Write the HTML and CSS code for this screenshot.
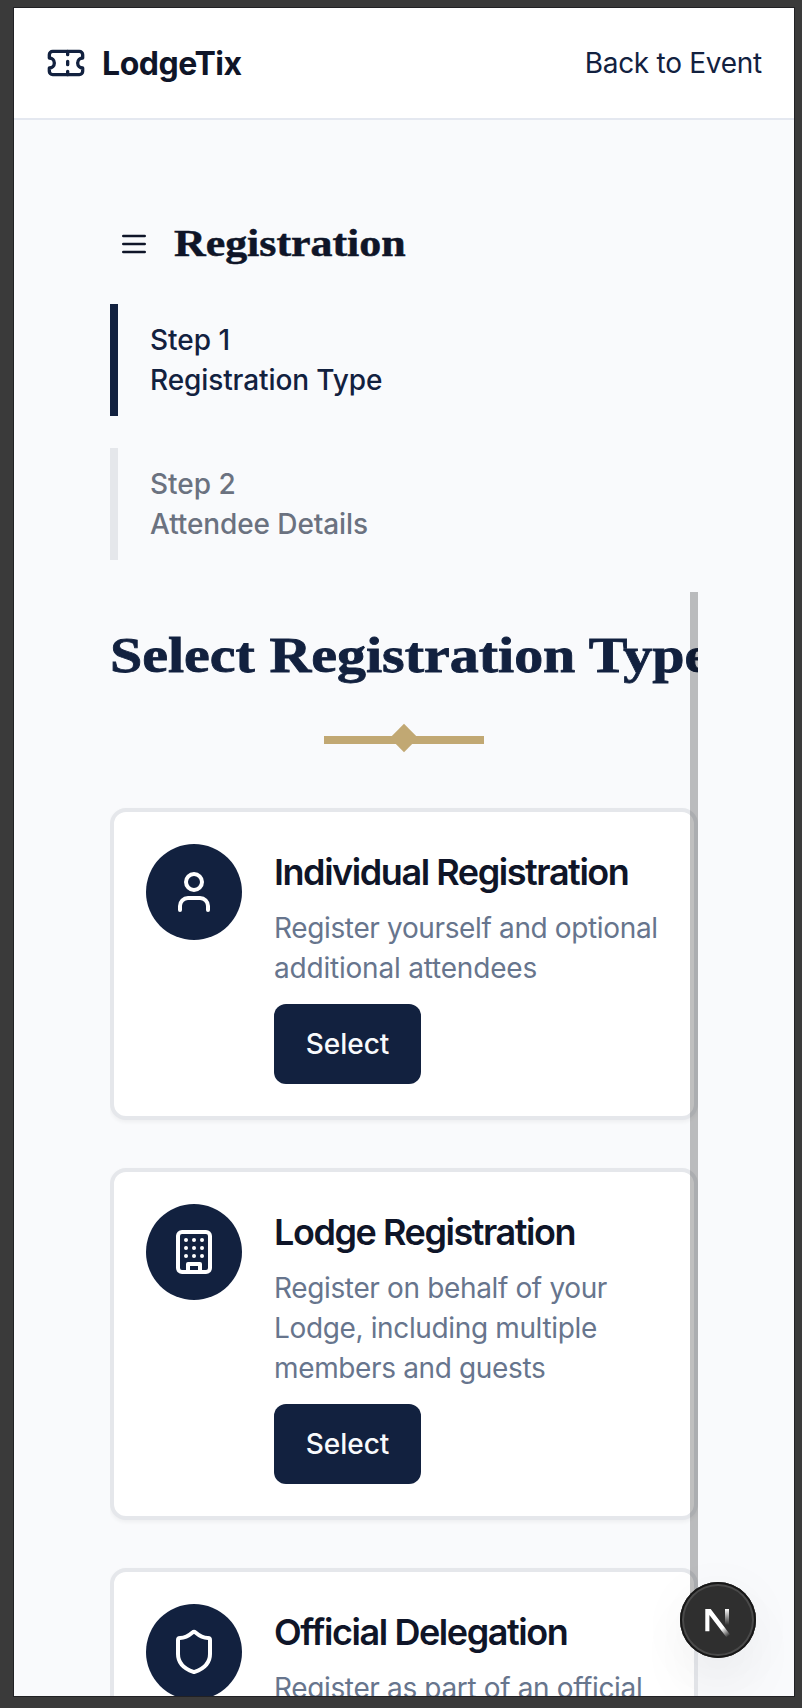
FILE: index.html
```html
<!DOCTYPE html>
<html lang="en">
<head>
<meta charset="utf-8">
<title>LodgeTix</title>
<link rel="stylesheet" href="styles.css">
</head>
<body>
<div class="app">
  <header class="header">
    <div class="brand">
      <svg class="icon brand-icon" viewBox="0 0 24 24"><path d="M2 9a3 3 0 0 1 0 6v2a2 2 0 0 0 2 2h16a2 2 0 0 0 2-2v-2a3 3 0 0 1 0-6V7a2 2 0 0 0-2-2H4a2 2 0 0 0-2 2Z"/><path d="M13 5v2M13 17v2M13 11v2"/></svg>
      <span class="brand-name">LodgeTix</span>
    </div>
    <a class="back">Back to Event</a>
  </header>
  <main class="main">
    <div class="page-head">
      <svg class="icon menu-icon" viewBox="0 0 24 24"><path d="M4 6h16M4 12h16M4 18h16"/></svg>
      <h2 class="page-title">Registration</h2>
    </div>
    <nav class="steps">
      <div class="step step-active"><span>Step 1</span><span class="step-name">Registration Type</span></div>
      <div class="step"><span>Step 2</span><span class="step-name">Attendee Details</span></div>
    </nav>
    <section class="scroller">
      <h1 class="title">Select Registration Type</h1>
      <div class="divider"><i class="diamond"></i></div>
      <div class="cards">
        <article class="card">
          <div class="avatar"><svg class="icon" viewBox="0 0 24 24"><path d="M19 21v-2a4 4 0 0 0-4-4H9a4 4 0 0 0-4 4v2"/><circle cx="12" cy="7" r="4"/></svg></div>
          <div class="card-body">
            <h3 class="card-title">Individual Registration</h3>
            <p class="desc">Register yourself and optional<br><span class="loose">additional attendees</span></p>
            <button class="select">Select</button>
          </div>
        </article>
        <article class="card">
          <div class="avatar"><svg class="icon" viewBox="0 0 24 24"><rect width="16" height="20" x="4" y="2" rx="2"/><path d="M9 22v-4h6v4M8 6h.01M16 6h.01M12 6h.01M12 10h.01M12 14h.01M16 10h.01M16 14h.01M8 10h.01M8 14h.01"/></svg></div>
          <div class="card-body">
            <h3 class="card-title">Lodge Registration</h3>
            <p class="desc">Register on behalf of your<br>Lodge, including multiple<br>members and guests</p>
            <button class="select">Select</button>
          </div>
        </article>
        <article class="card">
          <div class="avatar"><svg class="icon" viewBox="0 0 24 24"><path d="M20 13c0 5-3.5 7.5-7.66 8.95a1 1 0 0 1-.67-.01C7.5 20.5 4 18 4 13V6a1 1 0 0 1 1-1c2 0 4.5-1.2 6.24-2.72a1.17 1.17 0 0 1 1.52 0C14.51 3.81 17 5 19 5a1 1 0 0 1 1 1z"/></svg></div>
          <div class="card-body">
            <h3 class="card-title">Official Delegation</h3>
            <p class="desc">Register as part of an official</p>
          </div>
        </article>
      </div>
      <div class="thumb"></div>
    </section>
  </main>
  <div class="dev-badge">
    <svg viewBox="0 0 76 76" width="76" height="76">
      <defs>
        <linearGradient id="diag" gradientUnits="userSpaceOnUse" x1="39" y1="42" x2="49" y2="54"><stop offset="0" stop-color="#fff"/><stop offset=".35" stop-color="#fff"/><stop offset="1" stop-color="#fff" stop-opacity="0"/></linearGradient>
        <linearGradient id="stem" gradientUnits="userSpaceOnUse" x1="0" y1="27" x2="0" y2="43"><stop offset="0" stop-color="#fff"/><stop offset="1" stop-color="#fff" stop-opacity="0"/></linearGradient>
      </defs>
      <path d="M25.3 27h5.4L50 52.6l-3.6 2.6L29.4 33v16.3h-4.1z" fill="url(#diag)"/>
      <path d="M45 27h4v17h-4z" fill="url(#stem)"/>
    </svg>
  </div>
</div>
</body>
</html>
```
FILE: styles.css
```css
* { box-sizing: border-box; margin: 0; padding: 0; }
body {
  width: 802px; height: 1708px; overflow: hidden;
  padding: 7px 7px 11px 13px;
  background: #3a3a3a;
  font-family: Inter, "Liberation Sans", sans-serif;
  color: #0f1528;
}
.app {
  position: relative;
  width: 782px; height: 1690px; overflow: hidden;
  border: 1px solid #212124;
  background: #f9fafc;
}
.icon { display: block; fill: none; stroke: currentColor; stroke-width: 2; stroke-linecap: round; stroke-linejoin: round; }
.header {
  display: flex; align-items: center; justify-content: space-between;
  height: 112px; padding: 0 32px;
  background: #fff; border-bottom: 2px solid #e4e8f0;
}
.brand { display: flex; align-items: center; gap: 16px; }
.brand-icon { width: 40px; height: 40px; color: #12213f; }
.brand-name { padding-top: 2px; font-size: 32px; font-weight: 700; line-height: 40px; letter-spacing: -.45px; }
.back { font-size: 28px; line-height: 40px; color: #12213f; letter-spacing: -.27px; }
.main { padding: 92px 96px 0; }
.page-head { display: flex; align-items: center; gap: 24px; height: 64px; padding-left: 8px; }
.menu-icon { width: 32px; height: 32px; }
.page-title {
  font: 700 38px/56px "Liberation Serif", serif;
  -webkit-text-stroke: .5px currentColor;
  transform: translateY(-1px) scaleX(1.155); transform-origin: left;
}
.steps { display: flex; flex-direction: column; gap: 32px; margin-top: 28px; }
.step {
  display: flex; flex-direction: column;
  height: 112px; padding: 16px 0 16px 32px;
  border-left: 8px solid #e5e7eb;
  font-size: 28px; font-weight: 500; line-height: 40px; color: #6b7280;
}
.step-name { letter-spacing: -.1px; }
.step-active { border-color: #12213f; color: #12213f; }
.scroller { position: relative; width: 588px; height: 1104px; margin-top: 32px; overflow: hidden; }
.title {
  padding-top: 32px;
  font: 700 51px/64px "Liberation Serif", serif; color: #12213f; white-space: nowrap;
  -webkit-text-stroke: .8px currentColor;
  transform: translateY(-1px) scaleX(1.137); transform-origin: left;
}
.divider { position: relative; width: 160px; height: 8px; margin: 48px auto 64px 214px; background: #c1a873; }
.diamond { position: absolute; left: 70px; top: -8px; width: 20px; height: 20px; background: #c1a873; transform: rotate(45deg); }
.cards { display: flex; flex-direction: column; gap: 48px; }
.card {
  display: flex; gap: 32px; padding: 32px;
  background: #fff; border: 4px solid #e5e7eb; border-radius: 16px;
  box-shadow: 0 2px 4px rgba(0, 0, 0, .05);
}
.avatar { display: flex; flex: none; align-items: center; justify-content: center; width: 96px; height: 96px; border-radius: 50%; background: #12213f; color: #fff; }
.avatar .icon { width: 48px; height: 48px; }
.card-title { font-size: 36px; font-weight: 600; line-height: 56px; letter-spacing: -1.44px; white-space: nowrap; }
.desc { margin-top: 8px; font-size: 28px; line-height: 40px; color: #67758d; white-space: nowrap; letter-spacing: -.36px; }
.loose { letter-spacing: -.2px; }
.select { display: block; width: 147px; height: 80px; margin-top: 16px; border: 0; border-radius: 12px; background: #12213f; color: #f8fafc; font: 500 28px/40px Inter, sans-serif; }
.thumb { position: absolute; right: 0; top: 0; width: 8px; height: 1030px; background: rgba(0, 0, 0, .25); }
.dev-badge {
  position: absolute; left: 666px; top: 1574px; width: 76px; height: 76px; border-radius: 50%;
  background: #2f2f2f;
  box-shadow: inset 0 0 0 2px #171717, inset 0 0 0 4px #4a4a4a, 0 32px 64px -16px rgba(0, 0, 0, .12), 0 8px 56px rgba(0, 0, 0, .04);
}
.dev-badge svg { display: block; }
```
